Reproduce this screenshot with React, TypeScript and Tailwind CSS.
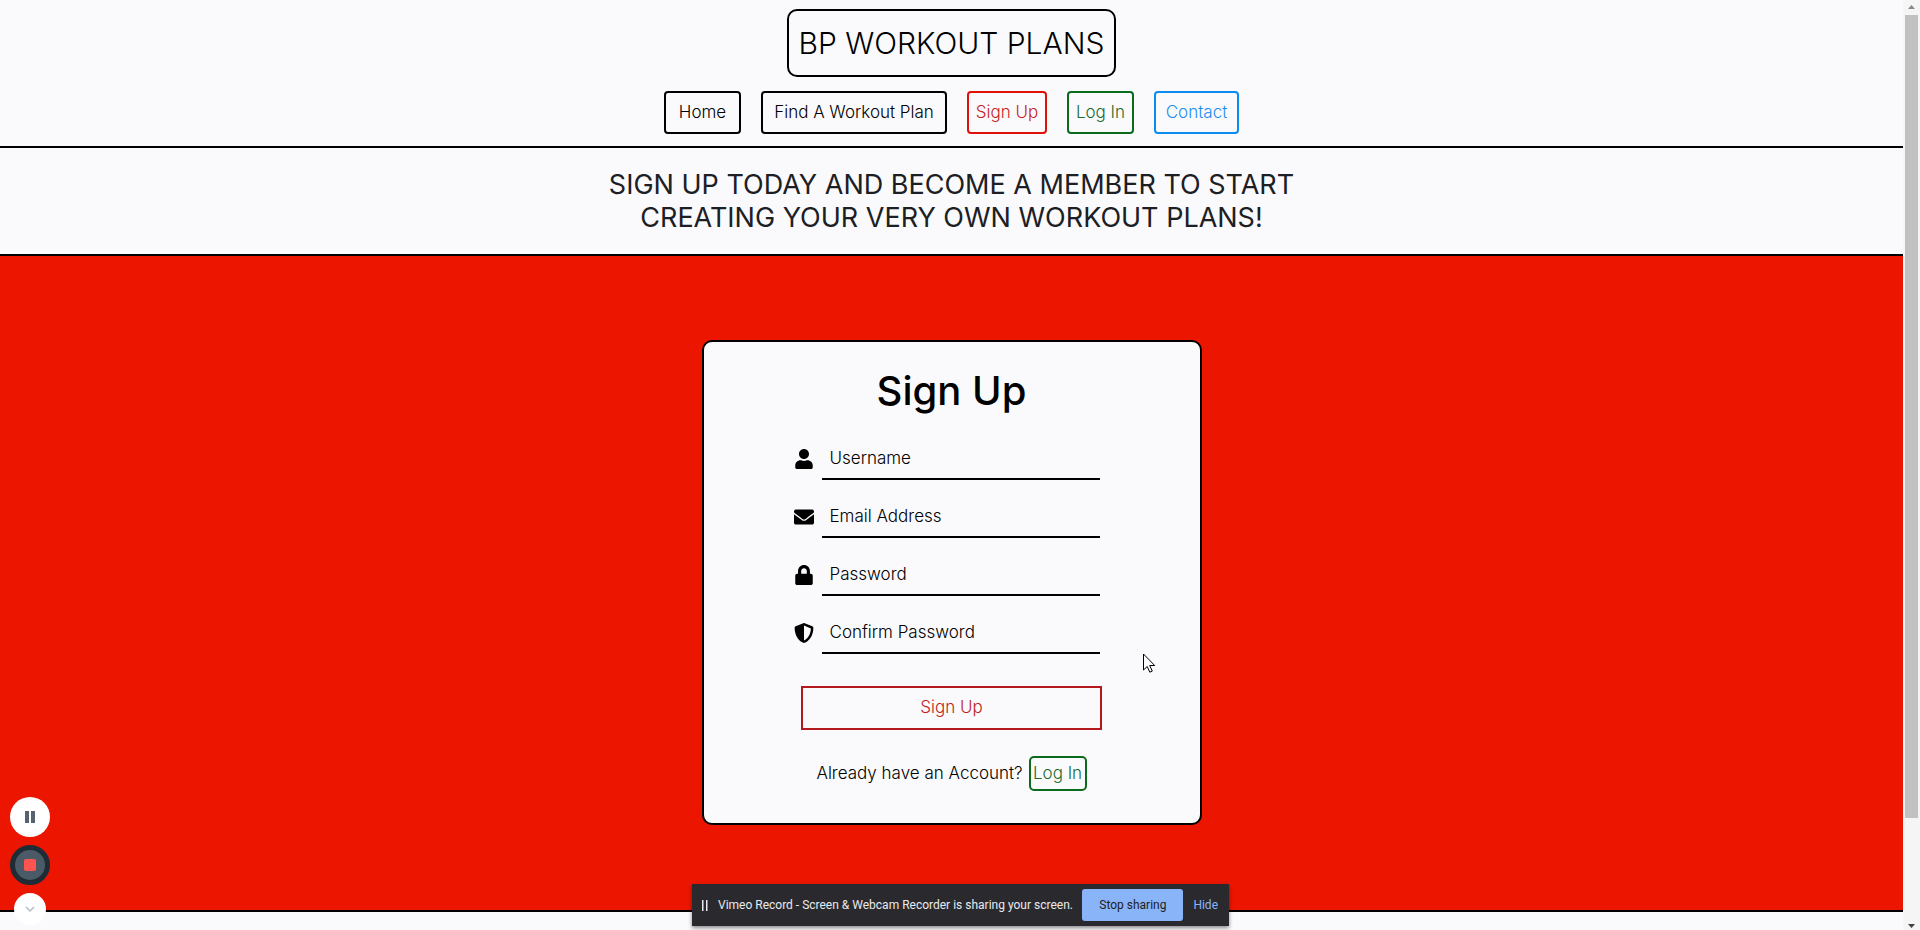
import type { ReactNode } from "react";
import { FaUser, FaEnvelope, FaLock, FaShieldAlt } from "react-icons/fa";

const navLinks = [
  { label: "Home", style: "w-[77px] border-black text-black" },
  { label: "Find A Workout Plan", style: "w-[186px] border-black text-black" },
  { label: "Sign Up", style: "w-20 border-[#e01008] text-[#c81e1e]" },
  { label: "Log In", style: "w-[67px] border-[#0b6b1c] text-[#1a6b2c]" },
  { label: "Contact", style: "w-[85px] border-[#0a8cf0] text-[#1a8cf0]" },
];

function Field({ id, label, type, icon }: { id: string; label: string; type: string; icon: ReactNode }) {
  return (
    <div className="flex h-[58px] items-center gap-2">
      <label htmlFor={id} aria-label={label} className="flex w-5 justify-center text-xl text-black">
        {icon}
      </label>
      <input
        id={id}
        type={type}
        placeholder={label}
        className="h-[42px] min-w-0 flex-1 border-b-2 border-black bg-transparent px-2 text-black outline-none placeholder:text-black"
      />
    </div>
  );
}

function SignUpCard() {
  return (
    <form className="flex h-[485px] w-[500px] flex-col items-center rounded-[10px] border-2 border-black bg-[#fafafc] pt-4">
      <h2 className="text-[40px] leading-[66px] font-medium text-black">Sign Up</h2>
      <div className="mt-[6px] w-[316px] pr-[10px]">
        <Field id="username" label="Username" type="text" icon={<FaUser />} />
        <Field id="email" label="Email Address" type="email" icon={<FaEnvelope />} />
        <Field id="password" label="Password" type="password" icon={<FaLock />} />
        <Field id="confirm" label="Confirm Password" type="password" icon={<FaShieldAlt />} />
      </div>
      <button type="button" className="mt-6 h-11 w-[301px] border-2 border-[#b3181c] text-[#c01c1c]">
        Sign Up
      </button>
      <p className="mt-[26px] flex items-center gap-[6px] text-black">
        Already have an Account?
        <a href="#login" className="flex h-[35px] w-[58px] items-center justify-center rounded-[5px] border-2 border-[#0b6b1c] whitespace-nowrap text-[#1a6b2c]">
          Log In
        </a>
      </p>
    </form>
  );
}

function Scrollbar() {
  return (
    <div className="flex w-[17px] flex-col items-center justify-between bg-[#f5f5f5]" aria-hidden="true">
      <svg viewBox="0 0 17 15" className="h-[15px] w-[17px]" fill="#8a8a8a"><path d="M5 9h7L8.500 5z" /></svg>
      <div className="mb-auto h-[803px] w-[13px] bg-[#c1c1c1]" />
      <svg viewBox="0 0 17 15" className="h-[15px] w-[17px]" fill="#404040"><path d="M5 9h7l-3.500 4z" /></svg>
    </div>
  );
}

function RecorderControls() {
  return (
    <div className="absolute bottom-[5px] left-[10px] flex flex-col items-center gap-2">
      <button type="button" aria-label="Pause" className="flex size-10 items-center justify-center rounded-full bg-white">
        <svg viewBox="0 0 10 12" className="h-3 w-[10px]" fill="#56636f"><path d="M0 0h4v12H0zM6 0h4v12H6z" /></svg>
      </button>
      <button type="button" aria-label="Stop" className="flex size-10 items-center justify-center rounded-full border-[5px] border-[#1f2c36] bg-[#4a5a66]">
        <span className="size-3 rounded-[2px] bg-[#ff5450]" />
      </button>
      <button type="button" aria-label="Collapse" className="flex size-8 items-center justify-center rounded-full bg-white">
        <svg viewBox="0 0 10 6" className="h-[6px] w-[10px]" fill="none" stroke="#b4bec8" strokeWidth="1.500"><path d="M1 1l4 4 4-4" /></svg>
      </button>
    </div>
  );
}

function SharingBar() {
  return (
    <div className="absolute bottom-1 left-[692px] flex h-[42px] w-[537px] items-center bg-[#2a2a2e] pr-[11px] pl-[9px] font-['Roboto',sans-serif] text-xs font-normal text-[#e8eaed] shadow-[0_2px_4px_rgba(0,0,0,0.45)]">
      <svg viewBox="0 0 7 11" className="h-[11px] w-[7px]" fill="#e8eaed"><path d="M1 0h1.500v11H1zM5 0h1.500v11H5z" /></svg>
      <span className="ml-[10px] whitespace-nowrap">Vimeo Record - Screen &amp; Webcam Recorder is sharing your screen.</span>
      <button type="button" className="ml-auto h-8 w-[101px] shrink-0 rounded-[3px] bg-[#8ab4f8] text-[#202124]">Stop sharing</button>
      <button type="button" className="ml-[10px] text-[#8ab4f8]">Hide</button>
    </div>
  );
}

function Pointer() {
  return (
    <svg viewBox="0 0 13 20" className="absolute top-[653px] left-[1143px] h-5 w-[13px]" fill="#fff" stroke="#000" aria-hidden="true">
      <path d="M.5 1v16l3.700-3.500 2.600 5.700 2.500-1.100-2.600-5.600h5z" />
    </svg>
  );
}

export default function App() {
  return (
    <div className="relative flex h-screen overflow-hidden bg-[#fafafc] font-['Inter','Liberation_Sans',sans-serif] text-[17px] font-light">
      <div className="flex min-w-0 flex-1 flex-col">
        <header className="flex flex-col items-center border-b-2 border-black pt-[9px] pb-3">
          <h1 className="flex h-[68px] w-[329px] items-center justify-center rounded-[10px] border-2 border-black text-[30px] font-light whitespace-nowrap text-black">
            BP WORKOUT PLANS
          </h1>
          <nav className="mt-[14px] flex gap-5">
            {navLinks.map((link) => (
              <a key={link.label} href="#" className={`flex h-[43px] items-center justify-center rounded-[4px] border-2 whitespace-nowrap ${link.style}`}>
                {link.label}
              </a>
            ))}
          </nav>
        </header>
        <section className="border-b-2 border-black px-4 pt-5 pb-[20px] text-center text-[27px] leading-[33px] font-normal text-[#1c2024]">
          SIGN UP TODAY AND BECOME A MEMBER TO START
          <br />
          CREATING YOUR VERY OWN WORKOUT PLANS!
        </section>
        <main className="flex justify-center border-b-2 border-black bg-[#ec1500] pt-[84px] pb-[85px]">
          <SignUpCard />
        </main>
      </div>
      <Scrollbar />
      <Pointer />
      <RecorderControls />
      <SharingBar />
    </div>
  );
}
